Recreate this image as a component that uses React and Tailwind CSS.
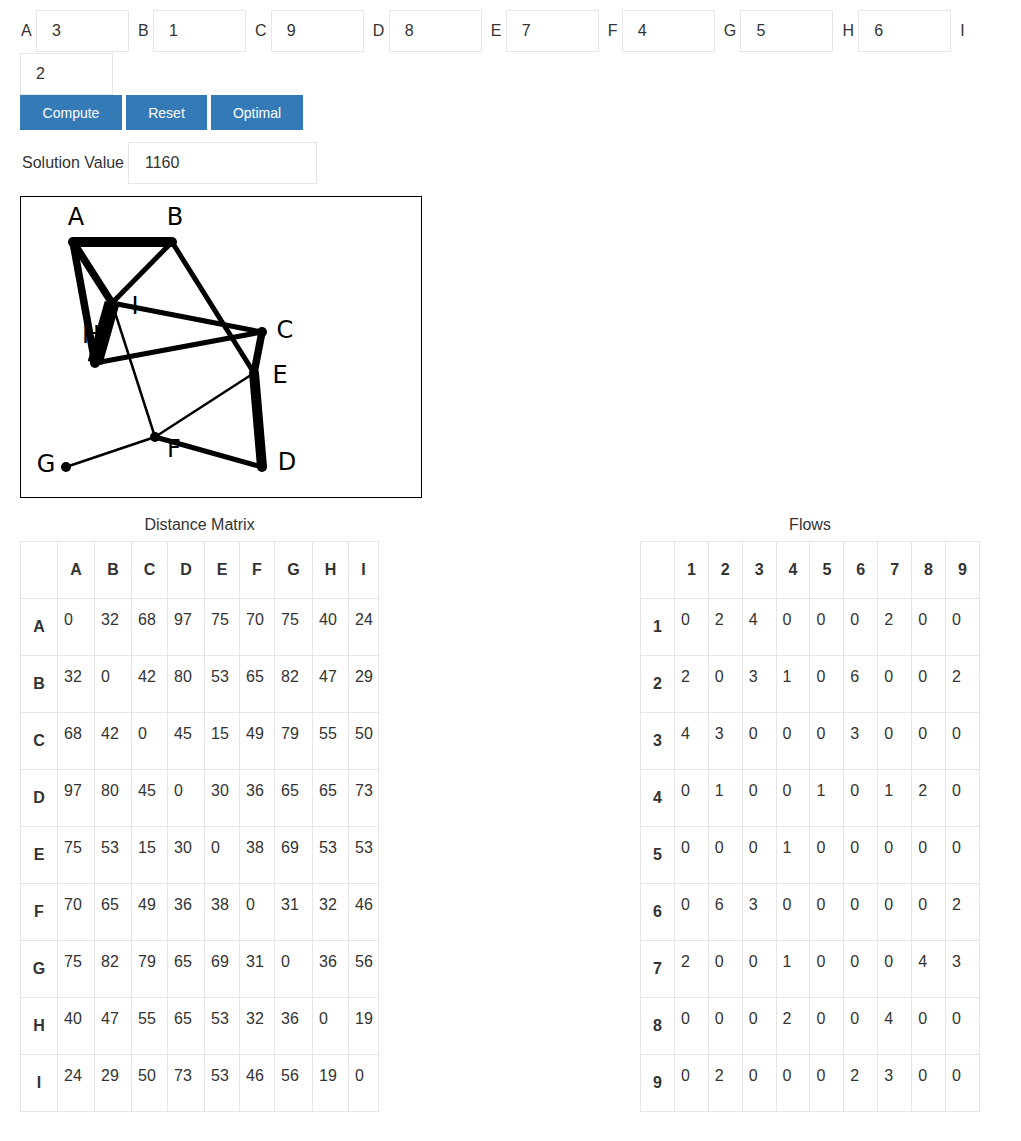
import { useState } from "react";

const LETTERS = ["A", "B", "C", "D", "E", "F", "G", "H", "I"];
const START = { A: "3", B: "1", C: "9", D: "8", E: "7", F: "4", G: "5", H: "6", I: "2" };

const DIST = [
    [0, 32, 68, 97, 75, 70, 75, 40, 24],
    [32, 0, 42, 80, 53, 65, 82, 47, 29],
    [68, 42, 0, 45, 15, 49, 79, 55, 50],
    [97, 80, 45, 0, 30, 36, 65, 65, 73],
    [75, 53, 15, 30, 0, 38, 69, 53, 53],
    [70, 65, 49, 36, 38, 0, 31, 32, 46],
    [75, 82, 79, 65, 69, 31, 0, 36, 56],
    [40, 47, 55, 65, 53, 32, 36, 0, 19],
    [24, 29, 50, 73, 53, 46, 56, 19, 0]
];

const FLOWS = [
    [0, 2, 4, 0, 0, 0, 2, 0, 0],
    [2, 0, 3, 1, 0, 6, 0, 0, 2],
    [4, 3, 0, 0, 0, 3, 0, 0, 0],
    [0, 1, 0, 0, 1, 0, 1, 2, 0],
    [0, 0, 0, 1, 0, 0, 0, 0, 0],
    [0, 6, 3, 0, 0, 0, 0, 0, 2],
    [2, 0, 0, 1, 0, 0, 0, 4, 3],
    [0, 0, 0, 2, 0, 0, 4, 0, 0],
    [0, 2, 0, 0, 0, 2, 3, 0, 0]
];

// node positions on the 400x300 canvas
const NODES = {
    A: [52, 45], B: [151, 45], C: [241, 135], D: [241, 270], E: [233, 176],
    F: [134, 240], G: [45, 270], H: [74, 166], I: [91, 106]
};

const LABELS = {
    A: [55, 20], B: [154, 20], C: [264, 133], D: [266, 265], E: [259, 178],
    F: [153, 252], G: [25, 267], H: [70, 138], I: [114, 109]
};

const DIST_COLS = ["w-[37px]", "w-[37px]", "w-[37px]", "w-[36px]", "w-[37px]", "w-[35px]", "w-[35px]", "w-[38px]", "w-[36px]", "w-[30px]"];

function Graph({ assign }) {
    // edge width follows the flow between the facilities placed at both ends
    const edges = [];
    LETTERS.forEach((a, i) => {
        LETTERS.forEach((b, j) => {
            if (j <= i) return;
            const fa = Number(assign[a]) - 1;
            const fb = Number(assign[b]) - 1;
            const f = FLOWS[fa]?.[fb] || 0;
            if (f > 0) edges.push({ a, b, w: f * 2.5 });
        });
    });

    return (
        <svg width="400" height="300" viewBox="0 0 400 300" className="block">
            <g fontFamily="'DejaVu Sans', sans-serif" fontSize="24" textAnchor="middle" dominantBaseline="central" fill="#000">
                {LETTERS.map((l) => (
                    <text key={l} x={LABELS[l][0]} y={LABELS[l][1]}>{l}</text>
                ))}
            </g>
            {edges.map((e) => (
                <line
                    key={e.a + e.b}
                    x1={NODES[e.a][0]} y1={NODES[e.a][1]}
                    x2={NODES[e.b][0]} y2={NODES[e.b][1]}
                    stroke="#000" strokeWidth={e.w}
                />
            ))}
            {LETTERS.map((l) => (
                <circle key={l} cx={NODES[l][0]} cy={NODES[l][1]} r="5" fill="#000" />
            ))}
        </svg>
    );
}

export default function App() {
    const [assign, setAssign] = useState(START);

    return (
        <div className="px-5 pt-[10px] pb-5 text-[16px] text-[#333] font-['Liberation_Sans',Arial,sans-serif]">
            {/* ===== assignment inputs ===== */}
            <div className="flex flex-wrap items-center gap-y-px">
                {LETTERS.map((l, i) => (
                    <div key={l} className="contents">
                        <label className={`mr-[4.3px] ${i === 0 ? "ml-px" : ""}`}>{l}</label>
                        <input
                            value={assign[l]}
                            onChange={(e) => setAssign({ ...assign, [l]: e.target.value })}
                            className="w-[93px] h-[42px] mr-[9px] border border-[#e6e6e6] pl-[15px] outline-none text-[#333]"
                        />
                    </div>
                ))}
            </div>

            {/* ===== buttons ===== */}
            <div className="flex gap-[4px]">
                <button className="w-[102px] h-[35px] bg-[#337ab7] text-white text-[14px] pt-px">Compute</button>
                <button className="w-[81px] h-[35px] bg-[#337ab7] text-white text-[14px] pt-px">Reset</button>
                <button className="w-[92px] h-[35px] bg-[#337ab7] text-white text-[14px] pt-px">Optimal</button>
            </div>

            {/* ===== solution ===== */}
            <div className="mt-[12px] flex items-center">
                <span className="ml-[2px] mr-[4px]">Solution Value</span>
                <input
                    readOnly
                    value="1160"
                    className="w-[189px] h-[42px] border border-[#e6e6e6] pl-[16px] outline-none"
                />
            </div>

            {/* ===== graph ===== */}
            <div className="mt-[12px] w-[402px] h-[302px] border border-black">
                <Graph assign={assign} />
            </div>

            {/* ===== tables ===== */}
            <div className="mt-[18px] flex items-start">
                <div>
                    <div className="text-center leading-[18px] mb-[7px]">Distance Matrix</div>
                    <table className="table-fixed border-collapse w-[359px]">
                        <colgroup>
                            {DIST_COLS.map((c, i) => (
                                <col key={i} className={c} />
                            ))}
                        </colgroup>
                        <thead>
                            <tr className="h-[57px]">
                                <th className="border border-[#e6e6e6]"></th>
                                {LETTERS.map((l) => (
                                    <th key={l} className="border border-[#e6e6e6] font-bold text-center align-middle">{l}</th>
                                ))}
                            </tr>
                        </thead>
                        <tbody>
                            {DIST.map((row, i) => (
                                <tr key={i} className="h-[57px]">
                                    <th className="border border-[#e6e6e6] font-bold text-center align-middle">{LETTERS[i]}</th>
                                    {row.map((v, j) => (
                                        <td key={j} className="border border-[#e6e6e6] align-top pl-[6px] pt-[9px] leading-[23px]">{v}</td>
                                    ))}
                                </tr>
                            ))}
                        </tbody>
                    </table>
                </div>

                <div className="ml-auto mr-[21px]">
                    <div className="text-center leading-[18px] mb-[7px]">Flows</div>
                    <table className="table-fixed border-collapse w-[340px]">
                        <thead>
                            <tr className="h-[57px]">
                                <th className="border border-[#e6e6e6]"></th>
                                {LETTERS.map((l, i) => (
                                    <th key={l} className="border border-[#e6e6e6] font-bold text-center align-middle">{i + 1}</th>
                                ))}
                            </tr>
                        </thead>
                        <tbody>
                            {FLOWS.map((row, i) => (
                                <tr key={i} className="h-[57px]">
                                    <th className="border border-[#e6e6e6] font-bold text-center align-middle">{i + 1}</th>
                                    {row.map((v, j) => (
                                        <td key={j} className="border border-[#e6e6e6] align-top pl-[6px] pt-[9px] leading-[23px]">{v}</td>
                                    ))}
                                </tr>
                            ))}
                        </tbody>
                    </table>
                </div>
            </div>
        </div>
    );
}
